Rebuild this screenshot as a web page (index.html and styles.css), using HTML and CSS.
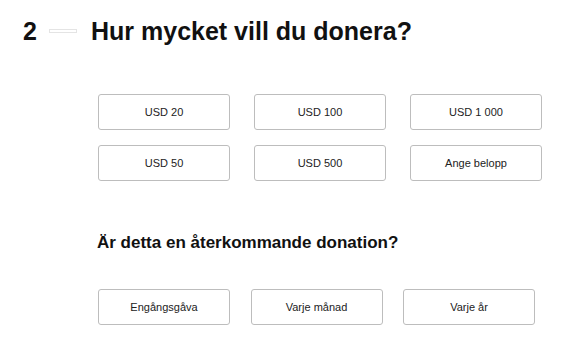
FILE: index.html
```html
<!DOCTYPE html>
<html lang="sv">
<head>
<meta charset="utf-8">
<link rel="stylesheet" href="styles.css">
</head>
<body>
<div class="page">
  <div class="step-head">
    <span class="step-num">2</span>
    <span class="step-line"></span>
    <h1 class="step-title">Hur mycket vill du donera?</h1>
  </div>
  <div class="amounts">
    <button class="opt">USD 20</button>
    <button class="opt">USD 100</button>
    <button class="opt">USD 1 000</button>
    <button class="opt">USD 50</button>
    <button class="opt">USD 500</button>
    <button class="opt">Ange belopp</button>
  </div>
  <h2 class="sub">Är detta en återkommande donation?</h2>
  <div class="freq">
    <button class="opt">Engångsgåva</button>
    <button class="opt">Varje månad</button>
    <button class="opt">Varje år</button>
  </div>
</div>
</body>
</html>
```
FILE: styles.css
```css
* { box-sizing: border-box; }
html, body { margin: 0; padding: 0; background: #fff; }
body { font-family: "Liberation Sans", Arial, sans-serif; color: #111; }
.page { padding: 0 0 0 23px; width: 578px; height: 348px; overflow: hidden; }
.step-head { display: flex; align-items: center; height: 62px; padding-top: 0; }
.step-num { font-size: 25px; font-weight: bold; width: 26px; }
.step-line { width: 28px; height: 4px; border: 1px solid #e4e4e4; margin-right: 14px; margin-top: 0; }
.step-title { margin: 0; font-size: 25px; font-weight: bold; }
.amounts { display: grid; grid-template-columns: repeat(3, 132px); column-gap: 24px; row-gap: 15px; margin: 32px 0 0 75px; }
.opt { height: 36px; border: 1px solid #bdbdbd; border-radius: 3px; background: #fff; font-family: "Liberation Sans", Arial, sans-serif; font-size: 11px; color: #222; padding: 0; }
.sub { margin: 52px 0 0 74px; font-size: 17px; font-weight: bold; height: 20px; line-height: 20px; }
.freq { display: grid; grid-template-columns: repeat(3, 132px); column-gap: 20.5px; margin: 36px 0 0 75px; }
```
